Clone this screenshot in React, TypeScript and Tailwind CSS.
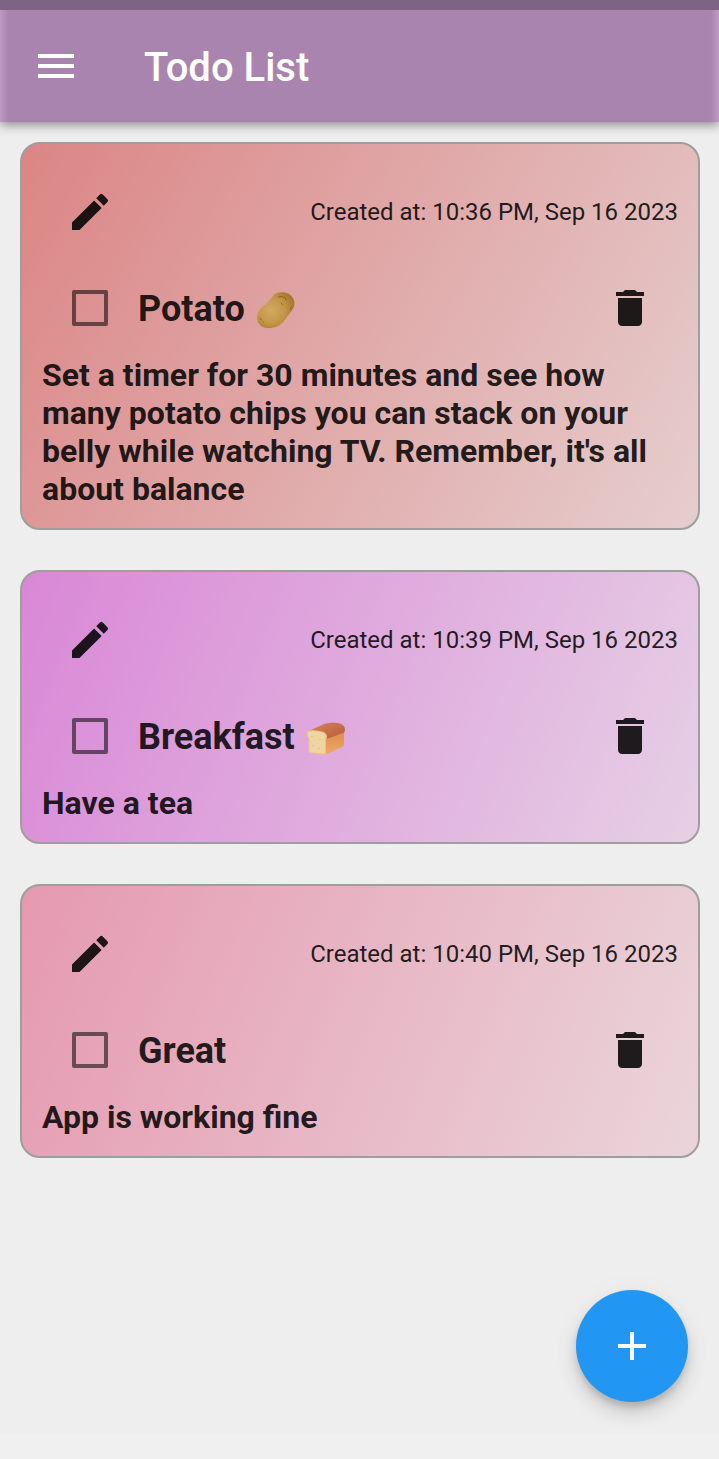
import type { ReactNode } from "react";

function Potato() {
  return (
    <svg viewBox="0 0 40 40" className="h-10 w-10" aria-label="Potato">
      <defs>
        <radialGradient id="potato" cx="0.38" cy="0.5" r="0.62">
          <stop offset="0" stopColor="#d3aa62" />
          <stop offset="0.6" stopColor="#c39647" />
          <stop offset="1" stopColor="#a8792f" />
        </radialGradient>
      </defs>
      <path d="M17.5 4.2C21.5.4 30.5.2 35 4.6c4.6 4.4 4.2 10.8 1.2 14.6-3 3.7-5 6.200-7.200 9.600-3.800 6-11.500 9-18.300 8.300C4 36.300.500 30.800 1.200 25.300 1.800 20.300 5.200 16.300 9.500 13.200 13.500 10.500 14.800 6.900 17.500 4.200z" fill="url(#potato)" />
      <path d="M22 6q4-1.500 7.500 1l.5 2M25 12l1.500 1.500M34 18l1.500-2M4 27l1.500 2M7 31l.5.500" fill="none" stroke="#85602a" strokeWidth="0.900" strokeLinecap="round" />
    </svg>
  );
}

function Bread() {
  return (
    <svg viewBox="0 0 40 40" className="h-10 w-10" aria-label="Bread">
      <defs>
        <linearGradient id="crust" x1="0" y1="0" x2="1" y2="1">
          <stop offset="0" stopColor="#d7835c" />
          <stop offset="1" stopColor="#b75d36" />
        </linearGradient>
        <linearGradient id="side" x1="0" y1="0" x2="0" y2="1">
          <stop offset="0" stopColor="#dc8b4b" />
          <stop offset="1" stopColor="#edaa65" />
        </linearGradient>
      </defs>
      <path d="M20 19l18-7v13.500q0 1.500-1.500 2.200L20 35.500z" fill="url(#side)" />
      <path d="M3 12L18 5q7-2.600 14-1c5 1 7 3.500 7 6.500 0 2-.500 3-2 3.500L20.500 20 18 14z" fill="url(#crust)" />
      <path d="M.5 14.500c0-3.500 5-3.500 10-3s10.500 1.500 10.500 6c0 2-.700 3-1 4v12q0 2.300-2 2.200L4.500 34q-2-.3-2-2V20c-1-1-2-3-2-5.500z" fill="#e9c287" />
      <path d="M1.500 14.500c0-2.500 4.500-2.500 9-2s9.300 1.500 9.300 5c0 1.500-.900 2-.900 3.500v12q0 1.700-1.500 1.500L5 33.200q-1.500-.2-1.500-1.500V20c0-1.500-2-3-2-5.500z" fill="#efd5a1" />
      <path d="M6 17v1M14 20v1M7 26v1M13 29v1" stroke="#dfb878" strokeWidth="1.300" />
    </svg>
  );
}

interface Todo {
  time: string;
  title: string;
  body: string;
  icon?: ReactNode;
  gradient: string;
}

const todos: Todo[] = [
  {
    time: "10:36 PM, Sep 16 2023",
    title: "Potato",
    body: "Set a timer for 30 minutes and see how many potato chips you can stack on your belly while watching TV. Remember, it's all about balance",
    icon: <Potato />,
    gradient: "bg-[linear-gradient(119.7deg,#db8585,#e6cece)]",
  },
  {
    time: "10:39 PM, Sep 16 2023",
    title: "Breakfast",
    body: "Have a tea",
    icon: <Bread />,
    gradient: "bg-[linear-gradient(112deg,#d987d6,#e6d0e5)]",
  },
  {
    time: "10:40 PM, Sep 16 2023",
    title: "Great",
    body: "App is working fine",
    gradient: "bg-[linear-gradient(112deg,#e599b0,#ead5da)]",
  },
];

function TodoCard({ todo }: { todo: Todo }) {
  return (
    <article className={`w-[680px] rounded-[20px] border-2 border-[#9e9e9e] bg-origin-border px-5 pb-5 text-black/87 ${todo.gradient}`}>
      <div className="flex h-[116px] items-center justify-between pt-5 pl-6">
        <button aria-label="Edit">
          <svg viewBox="0 0 24 24" className="size-12" fill="currentColor">
            <path d="M3 17.250V21h3.750L17.810 9.940l-3.750-3.750L3 17.250zM20.710 7.040a.996.996 0 0 0 0-1.410l-2.340-2.340a.996.996 0 0 0-1.410 0l-1.830 1.830 3.750 3.750 1.830-1.830z" />
          </svg>
        </button>
        <time className="text-[24px] leading-7">Created at: {todo.time}</time>
      </div>
      <div className="flex h-24 items-center pr-6 pl-[30px]">
        <button role="checkbox" aria-checked="false" aria-label="Done" className="size-9 rounded-[2px] border-4 border-black/54" />
        <h2 className="ml-[30px] flex items-center gap-[11px] pt-0.5 text-[36px] leading-[42px] font-bold">
          {todo.title}
          {todo.icon && <span className="pt-1">{todo.icon}</span>}
        </h2>
        <button aria-label="Delete" className="ml-auto">
          <svg viewBox="0 0 24 24" className="size-12" fill="currentColor">
            <path d="M6 19c0 1.100.9 2 2 2h8c1.100 0 2-.9 2-2V7H6v12zM19 4h-3.500l-1-1h-5l-1 1H5v2h14V4z" />
          </svg>
        </button>
      </div>
      <p className="w-[620px] text-[32px] leading-[38px] font-bold">{todo.body}</p>
    </article>
  );
}

export default function App() {
  return (
    <div className="relative flex h-[1459px] w-[719px] flex-col overflow-hidden bg-[#eeeeee] font-[Roboto,sans-serif]">
      <header className="z-10 w-full shrink-0 bg-[linear-gradient(90deg,#be9ac5_0,#a984af_8px,#a984af_711px,#be9ac5_719px)] shadow-[0_3px_10px_rgba(0,0,0,0.42)]">
        <div className="h-2.5 bg-[#7f6384]" />
        <div className="flex h-28 items-center pl-8 text-white">
          <svg viewBox="0 0 24 24" className="size-12" fill="currentColor">
            <path d="M3 18h18v-2H3v2zm0-5h18v-2H3v2zm0-7v2h18V6H3z" />
          </svg>
          <h1 className="ml-16 pt-[3px] text-[40px] leading-[48px] font-medium">Todo List</h1>
        </div>
      </header>
      <main className="flex flex-1 flex-col gap-10 pt-5 pl-5">
        {todos.map((todo) => (
          <TodoCard key={todo.title} todo={todo} />
        ))}
      </main>
      <button aria-label="Add" className="absolute right-[31px] bottom-[57px] flex size-28 items-center justify-center rounded-full bg-[#2196f3] text-white shadow-[0_6px_10px_-2px_rgba(0,0,0,0.2),0_12px_20px_rgba(0,0,0,0.12),0_2px_36px_rgba(0,0,0,0.03)]">
        <svg viewBox="0 0 24 24" className="size-12" fill="currentColor">
          <path d="M19 13h-6v6h-2v-6H5v-2h6V5h2v6h6v2z" />
        </svg>
      </button>
      <footer className="h-[25px] bg-[#f0f0f0]" />
    </div>
  );
}
